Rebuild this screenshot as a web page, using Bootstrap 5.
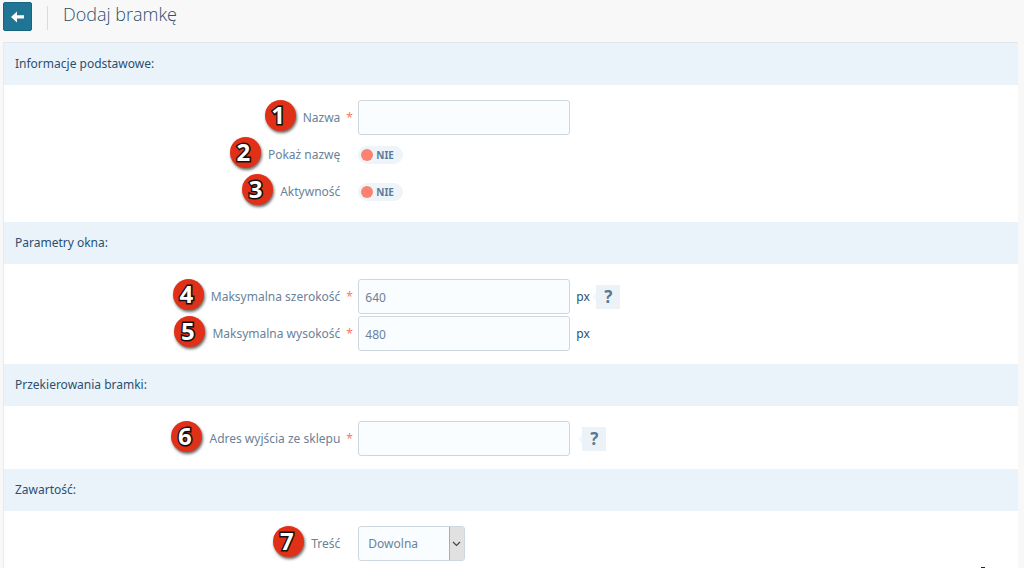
<!DOCTYPE html>
<html lang="pl">
<head>
<meta charset="utf-8">
<meta name="viewport" content="width=device-width, initial-scale=1">
<title>Dodaj bramkę</title>
<link href="https://cdn.jsdelivr.net/npm/bootstrap@5.3.0/dist/css/bootstrap.min.css" rel="stylesheet">
<script src="https://cdn.jsdelivr.net/npm/bootstrap@5.3.0/dist/js/bootstrap.bundle.min.js" defer></script>
<style>
body { background: #f8f8f8; color: #2b4f70; font-family: "Noto Sans", "Open Sans", sans-serif; font-size: 12px; line-height: 18px; }
.topbar { height: 42px; padding: 2px 3px 9px; }
.btn-back { width: 29px; height: 29px; background: #1f7593; border: 1px solid #17657f; border-radius: 2px; }
.btn-back:hover { background: #17657f; }
.topbar-rule { width: 1px; height: 24px; background: #d5dce2; margin: 0 15px; }
.page-title { font-family: "Open Sans", sans-serif; font-size: 18px; font-weight: 300; line-height: 24px; color: #2b4f70; }
.panel { background: #fff; margin: 0 6px 0 3px; box-shadow: inset 0 1px #dfe5ea, inset 1px 0 #e6ebef; }
.section-title { height: 43px; padding: 1px 11px 0; margin-left: 1px; background: #ebf3fa; background-clip: padding-box; font-size: 12px; font-weight: 400; border-top: 1px solid transparent; }
.section-body { padding: 15px 0 10px; }
.section-body:last-child { padding-bottom: 0; }
.field-row { height: 37px; }
.field-name { height: 35px; gap: 7px; padding-right: 1px; color: #6a8299; }
.field-value { height: 35px; }
.required-mark { width: 17px; height: 35px; color: #f47c68; padding-left: 5px; line-height: 35px; }
.step { width: 31px; height: 31px; margin-bottom: 4px; border-radius: 50%; background: #e03018; box-shadow: 1px 2px 3px #0009; color: #fff;
  font: 700 24px/29px "Noto Sans", sans-serif; padding-right: 4px; text-align: center; -webkit-text-stroke: 3px #111; paint-order: stroke fill; }
.field-box { width: 212px; height: 35px; padding: 2px 6px 0; font-size: 12px; color: #6a8299; background: #f9fdff; border: 1px solid #cfd7de; border-radius: 3px; }
.unit { margin-left: 6px; width: 20px; }
.help { position: relative; width: 24px; height: 24px; background: #ebf3f9; border-radius: 0; color: #5c7891; font-size: 17px; font-weight: 700; line-height: 24px; }
.help::before { content: ""; position: absolute; left: -4px; top: 8px; border: 4px solid transparent; border-left: 0; border-right-color: #f3f8fc; }
.switch-pill { width: 45px; height: 18px; padding-left: 3px; gap: 3px; background: #edf4fa; border-radius: 9px; color: #5d7c99; font-size: 10px; font-weight: 700; }
.switch-pill .form-check-input { width: 12px; height: 12px; margin: 0; border: 0; border-radius: 50%; background: #fb8270; }
.switch-pill .form-check-input:checked { background: #59b884; }
.choice { position: relative; width: 107px; }
.choice .field-box { width: 100%; padding: 0 24px 0 9px; background-image: none; }
.choice svg { position: absolute; right: 1px; top: 1px; pointer-events: none; }
.pointer { position: fixed; right: 37px; bottom: 0; }
</style>
</head>
<body class="d-flex flex-column min-vh-100">
<header class="topbar d-flex align-items-start">
  <button type="button" class="btn btn-back p-0 d-flex align-items-center justify-content-center" aria-label="Wstecz">
    <svg width="16" height="14" viewBox="0 0 16 14"><path d="M1 7 7 1.500v3.700h7v3.400H7v3.900z" fill="#fff"/></svg>
  </button>
  <div class="topbar-rule align-self-center"></div>
  <h1 class="page-title mb-0">Dodaj bramkę</h1>
</header>
<form class="panel flex-grow-1">
  <h2 class="section-title d-flex align-items-center mb-0">Informacje podstawowe:</h2>
  <div class="section-body">
    <div class="field-row row g-0">
      <div class="col-4 field-name d-flex align-items-center justify-content-end"><span class="step">1</span><label for="name">Nazwa</label></div>
      <div class="col-8 field-value d-flex align-items-center"><span class="required-mark">*</span><input id="name" type="text" class="form-control field-box" required></div>
    </div>
    <div class="field-row row g-0">
      <div class="col-4 field-name d-flex align-items-center justify-content-end"><span class="step">2</span><label for="show">Pokaż nazwę</label></div>
      <div class="col-8 field-value d-flex align-items-center"><span class="required-mark"></span><label class="switch-pill d-flex align-items-center"><input id="show" type="checkbox" class="form-check-input">NIE</label></div>
    </div>
    <div class="field-row row g-0">
      <div class="col-4 field-name d-flex align-items-center justify-content-end"><span class="step">3</span><label for="active">Aktywność</label></div>
      <div class="col-8 field-value d-flex align-items-center"><span class="required-mark"></span><label class="switch-pill d-flex align-items-center"><input id="active" type="checkbox" class="form-check-input">NIE</label></div>
    </div>
  </div>
  <h2 class="section-title d-flex align-items-center mb-0">Parametry okna:</h2>
  <div class="section-body">
    <div class="field-row row g-0">
      <div class="col-4 field-name d-flex align-items-center justify-content-end"><span class="step">4</span><label for="width">Maksymalna szerokość</label></div>
      <div class="col-8 field-value d-flex align-items-center"><span class="required-mark">*</span><input id="width" type="text" class="form-control field-box" value="640" required><span class="unit">px</span><button type="button" class="btn border-0 p-0 help">?</button></div>
    </div>
    <div class="field-row row g-0">
      <div class="col-4 field-name d-flex align-items-center justify-content-end"><span class="step">5</span><label for="height">Maksymalna wysokość</label></div>
      <div class="col-8 field-value d-flex align-items-center"><span class="required-mark">*</span><input id="height" type="text" class="form-control field-box" value="480" required><span class="unit">px</span></div>
    </div>
  </div>
  <h2 class="section-title d-flex align-items-center mb-0">Przekierowania bramki:</h2>
  <div class="section-body">
    <div class="field-row row g-0">
      <div class="col-4 field-name d-flex align-items-center justify-content-end"><span class="step">6</span><label for="exit">Adres wyjścia ze sklepu</label></div>
      <div class="col-8 field-value d-flex align-items-center"><span class="required-mark">*</span><input id="exit" type="text" class="form-control field-box me-2" required><button type="button" class="btn border-0 p-0 ms-1 help">?</button></div>
    </div>
  </div>
  <h2 class="section-title d-flex align-items-center mb-0">Zawartość:</h2>
  <div class="section-body">
    <div class="field-row row g-0">
      <div class="col-4 field-name d-flex align-items-center justify-content-end"><span class="step">7</span><label for="content">Treść</label></div>
      <div class="col-8 field-value d-flex align-items-center"><span class="required-mark"></span>
        <div class="choice"><select id="content" class="form-select field-box"><option>Dowolna</option></select>
          <svg width="15" height="33" viewBox="0 0 15 33"><path d="M0 0h15v33H0z" fill="#e1e1e1"/><path d="M.5 0v33" stroke="#adadad"/><path d="m4 15 3.500 3.500L11 15" fill="none" stroke="#444" stroke-width="1.200"/></svg>
        </div>
      </div>
    </div>
  </div>
</form>
<svg class="pointer" width="7" height="2" viewBox="0 0 7 2"><path d="M1 1h4v1H1z" fill="#222"/></svg>
</body>
</html>
